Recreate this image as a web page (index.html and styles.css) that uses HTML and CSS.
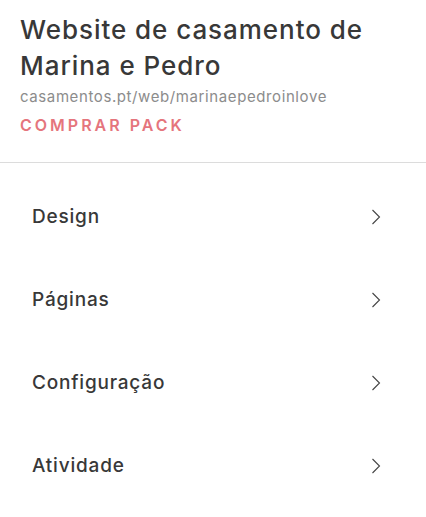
FILE: index.html
```html
<!DOCTYPE html>
<html lang="pt">
<head>
<meta charset="utf-8">
<title>Website de casamento</title>
<link rel="stylesheet" href="styles.css">
</head>
<body>
<header class="site-header">
  <h1 class="site-title">Website de casamento de Marina e Pedro</h1>
  <div class="site-url">casamentos.pt/web/marinaepedroinlove</div>
  <a class="buy-pack" href="#">COMPRAR PACK</a>
</header>
<nav class="menu">
  <a class="menu-item" href="#"><span>Design</span><svg class="chev" viewBox="0 0 10 16" width="10" height="16"><path d="M1.5 1 L8.5 8 L1.5 15" fill="none" stroke="#444" stroke-width="1.1"/></svg></a>
  <a class="menu-item" href="#"><span>Páginas</span><svg class="chev" viewBox="0 0 10 16" width="10" height="16"><path d="M1.5 1 L8.5 8 L1.5 15" fill="none" stroke="#444" stroke-width="1.1"/></svg></a>
  <a class="menu-item" href="#"><span>Configuração</span><svg class="chev" viewBox="0 0 10 16" width="10" height="16"><path d="M1.5 1 L8.5 8 L1.5 15" fill="none" stroke="#444" stroke-width="1.1"/></svg></a>
  <a class="menu-item" href="#"><span>Atividade</span><svg class="chev" viewBox="0 0 10 16" width="10" height="16"><path d="M1.5 1 L8.5 8 L1.5 15" fill="none" stroke="#444" stroke-width="1.1"/></svg></a>
</nav>
</body>
</html>
```
FILE: styles.css
```css
html, body {
  margin: 0;
  padding: 0;
  background: #fff;
  font-family: Inter, "Open Sans", sans-serif;
  color: #333;
}
.site-header {
  padding: 12px 20px 27px 20px;
  border-bottom: 1px solid #dcdcdc;
}
.site-title {
  margin: 0;
  font-size: 26px;
  line-height: 36px;
  font-weight: 500;
  letter-spacing: 0.95px;
  color: #383838;
}
.site-url {
  margin-top: 3px;
  font-size: 15px;
  line-height: 20px;
  letter-spacing: 0.6px;
  color: #8c8c8c;
}
.buy-pack {
  display: block;
  margin-top: 8px;
  font-size: 16px;
  line-height: 20px;
  font-weight: 600;
  letter-spacing: 3px;
  color: #e5757d;
  text-decoration: none;
}
.menu {
  display: flex;
  flex-direction: column;
  padding-top: 12px;
}
.menu-item {
  display: flex;
  align-items: center;
  justify-content: space-between;
  height: 83px;
  padding: 0 45px 0 32px;
  font-size: 19px;
  font-weight: 500;
  letter-spacing: 0.8px;
  color: #383838;
  text-decoration: none;
}
.chev {
  display: block;
}
```
